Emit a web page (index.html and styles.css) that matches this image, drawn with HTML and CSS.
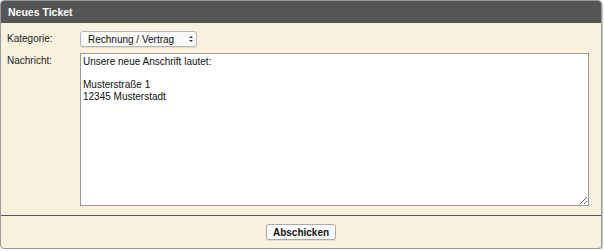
FILE: index.html
```
<!DOCTYPE html>
<html lang="de">
<head>
    <meta charset="UTF-8">
    <title>Neues Ticket</title>
    <link rel="stylesheet" href="styles.css">
</head>
<body>
    <div class="panel">
        <div class="panel-header">Neues Ticket</div>
        <div class="panel-body">
            <div class="form-row">
                <label class="form-label" for="kategorie">Kategorie:</label>
                <div class="select-wrap">
                    <select id="kategorie" class="form-select">
                        <option>Rechnung / Vertrag</option>
                    </select>
                </div>
            </div>
            <div class="form-row">
                <label class="form-label" for="nachricht">Nachricht:</label>
                <textarea id="nachricht" class="form-textarea">Unsere neue Anschrift lautet:

Musterstraße 1
12345 Musterstadt</textarea>
            </div>
        </div>
        <div class="panel-footer">
            <button class="btn">Abschicken</button>
        </div>
    </div>
</body>
</html>
```

FILE: styles.css
```
* {
    box-sizing: border-box;
    margin: 0;
    padding: 0;
}

body {
    font-family: 'Liberation Sans', Arial, sans-serif;
    font-size: 10px;
    color: #222;
    background-color: #fff;
}

.panel {
    width: 602px;
    height: 249px;
    border: 1px solid #9a9a9a;
    border-radius: 4px;
    background-color: #f9f1de;
    box-shadow: 1px 1px 1px rgba(0, 0, 0, 0.25);
    overflow: hidden;
    display: flex;
    flex-direction: column;
}

.panel-header {
    height: 22px;
    background-color: #555555;
    color: #fff;
    font-weight: bold;
    font-size: 10.5px;
    line-height: 22px;
    padding-left: 7px;
}

.panel-body {
    padding: 8px 12px 9px 6px;
    display: flex;
    flex-direction: column;
    gap: 6px;
    border-bottom: 1px solid #555;
}

.form-row {
    display: flex;
    align-items: flex-start;
}

.form-label {
    width: 73px;
    line-height: 16px;
}

/* Auswahlfeld mit kleinen Pfeilen rechts */
.select-wrap {
    position: relative;
}

.select-wrap::before,
.select-wrap::after {
    content: '';
    position: absolute;
    right: 4px;
    border-left: 2px solid transparent;
    border-right: 2px solid transparent;
    pointer-events: none;
}

.select-wrap::before {
    top: 5px;
    border-bottom: 2px solid #333;
}

.select-wrap::after {
    top: 9px;
    border-top: 2px solid #333;
}

.form-select {
    appearance: none;
    -webkit-appearance: none;
    display: block;
    width: 117px;
    height: 16px;
    font-family: inherit;
    font-size: 10px;
    color: #111;
    border: 1px solid #b5b5b5;
    border-radius: 3px;
    background-color: #fafafa;
    box-shadow: 0 1px 0 rgba(0, 0, 0, 0.08);
    padding-left: 7px;
}

.form-textarea {
    width: 509px;
    height: 153px;
    font-family: inherit;
    font-size: 10px;
    line-height: 11.5px;
    color: #111;
    border: 1px solid #9a9a9a;
    background-color: #fff;
    padding: 2px 2px;
}

.panel-footer {
    flex: 1;
    display: flex;
    justify-content: center;
    padding-top: 8px;
}

.btn {
    height: 16px;
    padding: 0 6px;
    font-family: inherit;
    font-size: 10px;
    font-weight: bold;
    color: #111;
    background-color: #fbfbfb;
    border: 1px solid #aaa;
    border-radius: 3px;
    box-shadow: 0 1px 0 rgba(0, 0, 0, 0.08);
}
```
